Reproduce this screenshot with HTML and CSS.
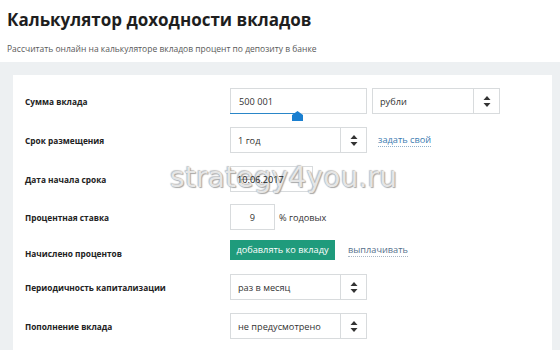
FILE: index.html
```html
<!DOCTYPE html>
<html lang="ru">
<head>
<meta charset="utf-8">
<link rel="stylesheet" href="styles.css">
</head>
<body>
<header class="head">
  <h1 class="title">Калькулятор доходности вкладов</h1>
  <p class="sub">Рассчитать онлайн на калькуляторе вкладов процент по депозиту в банке</p>
</header>
<main class="area">
  <section class="card">
    <div class="row r1">
      <div class="label">Сумма вклада</div>
      <div class="ctrl">
        <div class="input amount">
          <span>500 001</span>
          <span class="track"></span>
          <svg class="handle" width="11" height="10" viewBox="0 0 11 10"><path d="M5.5 0 L11 4 V10 H0 V4 Z" fill="#1a7fd0"/></svg>
        </div>
        <div class="select cur"><span class="val">рубли</span><span class="arr"><svg width="8" height="11" viewBox="0 0 8 11"><path d="M4 0 L7.5 4 H0.5 Z M4 11 L7.5 7 H0.5 Z" fill="#333"/></svg></span></div>
      </div>
    </div>
    <div class="row r2">
      <div class="label">Срок размещения</div>
      <div class="ctrl">
        <div class="select wide"><span class="val">1 год</span><span class="arr"><svg width="8" height="11" viewBox="0 0 8 11"><path d="M4 0 L7.5 4 H0.5 Z M4 11 L7.5 7 H0.5 Z" fill="#333"/></svg></span></div>
        <a class="link">задать свой</a>
      </div>
    </div>
    <div class="row r3">
      <div class="label">Дата начала срока</div>
      <div class="ctrl">
        <div class="input date"><span class="dtext">10.06.2017</span></div>
      </div>
    </div>
    <div class="row r4">
      <div class="label">Процентная ставка</div>
      <div class="ctrl">
        <div class="input rate"><span>9</span></div>
        <span class="unit">% годовых</span>
      </div>
    </div>
    <div class="row r5">
      <div class="label">Начислено процентов</div>
      <div class="ctrl">
        <span class="btn">добавлять ко вкладу</span>
        <a class="link alt">выплачивать</a>
      </div>
    </div>
    <div class="row r6">
      <div class="label">Периодичность капитализации</div>
      <div class="ctrl">
        <div class="select wide"><span class="val">раз в месяц</span><span class="arr"><svg width="8" height="11" viewBox="0 0 8 11"><path d="M4 0 L7.5 4 H0.5 Z M4 11 L7.5 7 H0.5 Z" fill="#333"/></svg></span></div>
      </div>
    </div>
    <div class="row r7">
      <div class="label">Пополнение вклада</div>
      <div class="ctrl">
        <div class="select wide"><span class="val">не предусмотрено</span><span class="arr"><svg width="8" height="11" viewBox="0 0 8 11"><path d="M4 0 L7.5 4 H0.5 Z M4 11 L7.5 7 H0.5 Z" fill="#333"/></svg></span></div>
      </div>
    </div>
  </section>
</main>
<div class="mark">strategy4you.ru</div>
</body>
</html>
```
FILE: styles.css
```css
html, body {
  margin: 0;
  padding: 0;
  background: #ffffff;
  font-family: "Open Sans", "Liberation Sans", sans-serif;
  color: #222;
  width: 560px;
  height: 350px;
  overflow: hidden;
  position: relative;
}
.head {
  padding: 8px 0 0 7px;
  height: 62px;
  box-sizing: border-box;
}
.title {
  margin: 0;
  font-size: 17px;
  font-weight: 700;
  line-height: 24px;
  color: #1e1e1e;
}
.sub {
  margin: 11px 0 0 0;
  font-size: 8.5px;
  line-height: 12px;
  color: #5a5a5a;
}
.area {
  background: #edf0f2;
  padding: 13px 8px 0 13px;
  height: 288px;
  box-sizing: border-box;
}
.card {
  background: #ffffff;
  height: 290px;
  padding: 13px 0 0 12px;
  box-sizing: border-box;
}
.row {
  display: flex;
  align-items: center;
  height: 26px;
  margin-bottom: 13px;
}
.r1 { margin-bottom: 13px; }
.r3 { margin-bottom: 12px; }
.r4 { margin-bottom: 10px; }
.r5 { margin-bottom: 8px; }
.label {
  width: 205px;
  font-size: 8.3px;
  font-weight: 700;
  color: #222;
}
.ctrl {
  display: flex;
  align-items: center;
}
.input, .select {
  height: 26px;
  box-sizing: border-box;
  border: 1px solid #d8dbdd;
  background: #fff;
  font-size: 9.2px;
  color: #333;
  display: flex;
  align-items: center;
}
.input { padding-left: 8px; }
.amount {
  width: 137px;
  position: relative;
}
.track {
  position: absolute;
  left: -1px;
  bottom: -1px;
  width: 68px;
  height: 1px;
  background: #2a86c8;
}
.handle {
  position: absolute;
  left: 61px;
  top: 22px;
}
.select .val {
  flex: 1;
  padding-left: 7px;
}
.select .arr {
  width: 25px;
  height: 100%;
  border-left: 1px solid #d8dbdd;
  display: flex;
  align-items: center;
  justify-content: center;
}
.cur {
  width: 128px;
  margin-left: 5px;
}
.wide { width: 137px; }
.link {
  margin-left: 11px;
  font-size: 9.2px;
  color: #3b7bb0;
  border-bottom: 1px dotted #8fb1cc;
  line-height: 12px;
}
.alt {
  margin-left: 13px;
  color: #56708c;
  border-bottom-color: #a9b6c4;
}
.date {
  width: 83px;
  padding-left: 6px;
}
.dtext {
  position: relative;
  z-index: 3;
  color: #222;
}
.rate {
  width: 45px;
  padding-left: 0;
  justify-content: center;
}
.unit {
  margin-left: 4px;
  font-size: 9.2px;
  color: #333;
}
.btn {
  background: #1f9b7c;
  color: #fff;
  font-size: 9.2px;
  height: 20px;
  line-height: 20px;
  width: 105px;
  white-space: nowrap;
  text-align: center;
  margin-top: -6px;
}
.r5 .alt { margin-top: -6px; }
.mark {
  position: absolute;
  z-index: 2;
  left: 170px;
  top: 161px;
  font-family: "DejaVu Sans", sans-serif;
  font-size: 28px;
  color: rgba(255,255,255,0.75);
  text-shadow: 0 0 1px #999, 1px 1px 1px #aaa, -1px -1px 1px #ccc;
  letter-spacing: 0.2px;
}
```
